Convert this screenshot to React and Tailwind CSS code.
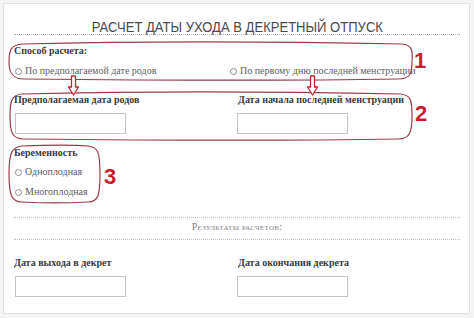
import React from 'react'

const serif = { fontFamily: '"Liberation Serif", "DejaVu Serif", serif' }
const sans = { fontFamily: '"Liberation Sans", Arial, sans-serif' }

function Radio({ label }) {
  return (
    <label className="flex items-center gap-[3px] text-[10px] leading-[12px] text-[#5e5e5e]">
      <span className="w-[7px] h-[7px] rounded-full border border-[#8a8a8a] bg-white shrink-0" />
      {label}
    </label>
  )
}

function Field() {
  return <div className="w-[111px] h-[21px] border border-[#c4c4c4] bg-white" />
}

function Annotations() {
  const stroke = '#9c3a4a'
  return (
    <div className="absolute left-0 top-0 w-[474px] h-[318px] pointer-events-none">
      <svg width="474" height="318" className="absolute left-0 top-0">
        <g fill="none" stroke={stroke} strokeWidth="1.2">
          <path d="M 22 44 C 150 41, 300 42, 402 44 C 412 45, 413 50, 412 62 C 412 74, 410 79, 398 79 C 280 81, 120 80, 24 79 C 12 79, 9 72, 9 62 C 9 50, 11 45, 22 44 Z" />
          <path d="M 22 94 C 150 91, 300 92, 400 94 C 411 95, 412 100, 412 116 C 412 132, 410 139, 398 139 C 280 141, 120 140, 24 139 C 12 139, 10 132, 10 116 C 10 100, 12 95, 22 94 Z" />
          <path d="M 22 146 C 50 145, 75 145, 88 146 C 98 147, 100 152, 100 174 C 100 196, 98 202, 88 202 C 70 203, 40 203, 22 202 C 12 202, 9 196, 9 174 C 9 152, 12 147, 22 146 Z" />
        </g>
        <g fill="#fff" stroke="#c8202c" strokeWidth="1.3" strokeLinejoin="round">
          <path d="M 71.5 76 H 75.5 V 87 H 78.5 L 73.5 95 L 68.5 87 H 71.5 Z" />
          <path d="M 310.5 76 H 314.5 V 87 H 317.5 L 312.5 95 L 307.5 87 H 310.5 Z" />
        </g>
      </svg>
      <span className="absolute left-[414px] top-[50px] text-[22px] leading-none font-bold text-[#cc1f2d]" style={sans}>1</span>
      <span className="absolute left-[415px] top-[103px] text-[22px] leading-none font-bold text-[#cc1f2d]" style={sans}>2</span>
      <span className="absolute left-[104px] top-[166px] text-[22px] leading-none font-bold text-[#cc1f2d]" style={sans}>3</span>
    </div>
  )
}

export default function App() {
  return (
    <div className="relative w-[474px] h-[318px] bg-[#f5f5f5] pt-[3px] pl-[3px]" style={serif}>
      <div className="w-[467px] h-[311px] bg-white border border-[#e2e2e2] pl-[10px] pr-[9px] flex flex-col">
        <div className="pt-[15px] leading-[15px] text-[15px] text-center text-[#4a4a4a] border-b border-dotted border-[#a8a8a8]" style={sans}>
          <span className="inline-block scale-x-[0.87] whitespace-nowrap">РАСЧЕТ ДАТЫ УХОДА В ДЕКРЕТНЫЙ ОТПУСК</span>
        </div>

        <div className="mt-[10px] text-[10px] leading-[12px] font-bold text-[#3a3a3a]">Способ расчета:</div>
        <div className="mt-[8px] grid grid-cols-[215px_1fr] pl-px">
          <Radio label="По предполагаемой дате родов" />
          <Radio label="По первому дню последней менструации" />
        </div>

        <div className="mt-[17px] grid grid-cols-[224px_1fr] text-[10px] leading-[12px] font-bold text-[#3a3a3a]">
          <div>Предполагаемая дата родов</div>
          <div>Дата начала последней менструации</div>
        </div>
        <div className="mt-[7px] grid grid-cols-[222px_1fr] pl-px">
          <Field />
          <Field />
        </div>

        <div className="mt-[13px] text-[10px] leading-[12px] font-bold text-[#3a3a3a]">Беременность</div>
        <div className="mt-[7px] pl-px">
          <Radio label="Одноплодная" />
        </div>
        <div className="mt-[8px] pl-px">
          <Radio label="Многоплодная" />
        </div>

        <div className="mt-[19px] border-t border-b border-dotted border-[#c0c0c0] pt-[4px] pb-[7px] text-center text-[10px] leading-[10px] tracking-[0.3px] text-[#7f7f7f] [font-variant:small-caps]">
          Результаты расчетов:
        </div>

        <div className="mt-[17px] grid grid-cols-[224px_1fr] text-[10px] leading-[12px] font-bold text-[#3a3a3a]">
          <div>Дата выхода в декрет</div>
          <div>Дата окончания декрета</div>
        </div>
        <div className="mt-[7px] grid grid-cols-[222px_1fr] pl-px">
          <Field />
          <Field />
        </div>
      </div>
      <Annotations />
    </div>
  )
}
